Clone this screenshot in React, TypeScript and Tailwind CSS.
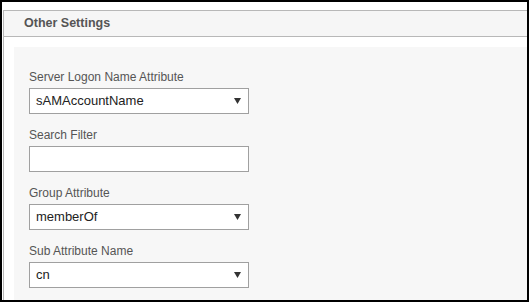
const fields = [
  { label: "Server Logon Name Attribute", value: "sAMAccountName", select: true },
  { label: "Search Filter", value: "", select: false },
  { label: "Group Attribute", value: "memberOf", select: true },
  { label: "Sub Attribute Name", value: "cn", select: true },
];

export default function App() {
  return (
    <div
      className="w-[529px] h-[302px] border-2 border-black bg-white overflow-hidden"
      style={{ fontFamily: '"Segoe UI", "Liberation Sans", Arial, sans-serif' }}
    >
      <div className="ml-px mt-2 h-full border-l border-[#b8b8b8] flex flex-col">
        <div className="h-[27px] border-y border-[#b8b8b8] bg-[#f6f6f6] pl-5 flex items-center">
          <span className="text-[12.5px] font-bold text-[#555] leading-none">Other Settings</span>
        </div>
        <div className="flex-1 mt-[10px] ml-[10px] bg-[#f7f7f7] pt-[23px] pl-[15px]">
          {fields.map((f) => (
            <div key={f.label} className="mb-[14px]">
              <div className="h-[18px] text-[12px] leading-[15px] text-[#555]">{f.label}</div>
              <div className="w-[220px] h-[26px] border border-[#a0a0a0] bg-white flex items-center justify-between pl-[6px] pr-[7px]">
                <span className="text-[13px] text-[#222]">{f.value}</span>
                {f.select && (
                  <svg width="7" height="6" viewBox="0 0 7 6">
                    <path d="M0 0 H7 L3.5 6 Z" fill="#333" />
                  </svg>
                )}
              </div>
            </div>
          ))}
        </div>
      </div>
    </div>
  );
}
